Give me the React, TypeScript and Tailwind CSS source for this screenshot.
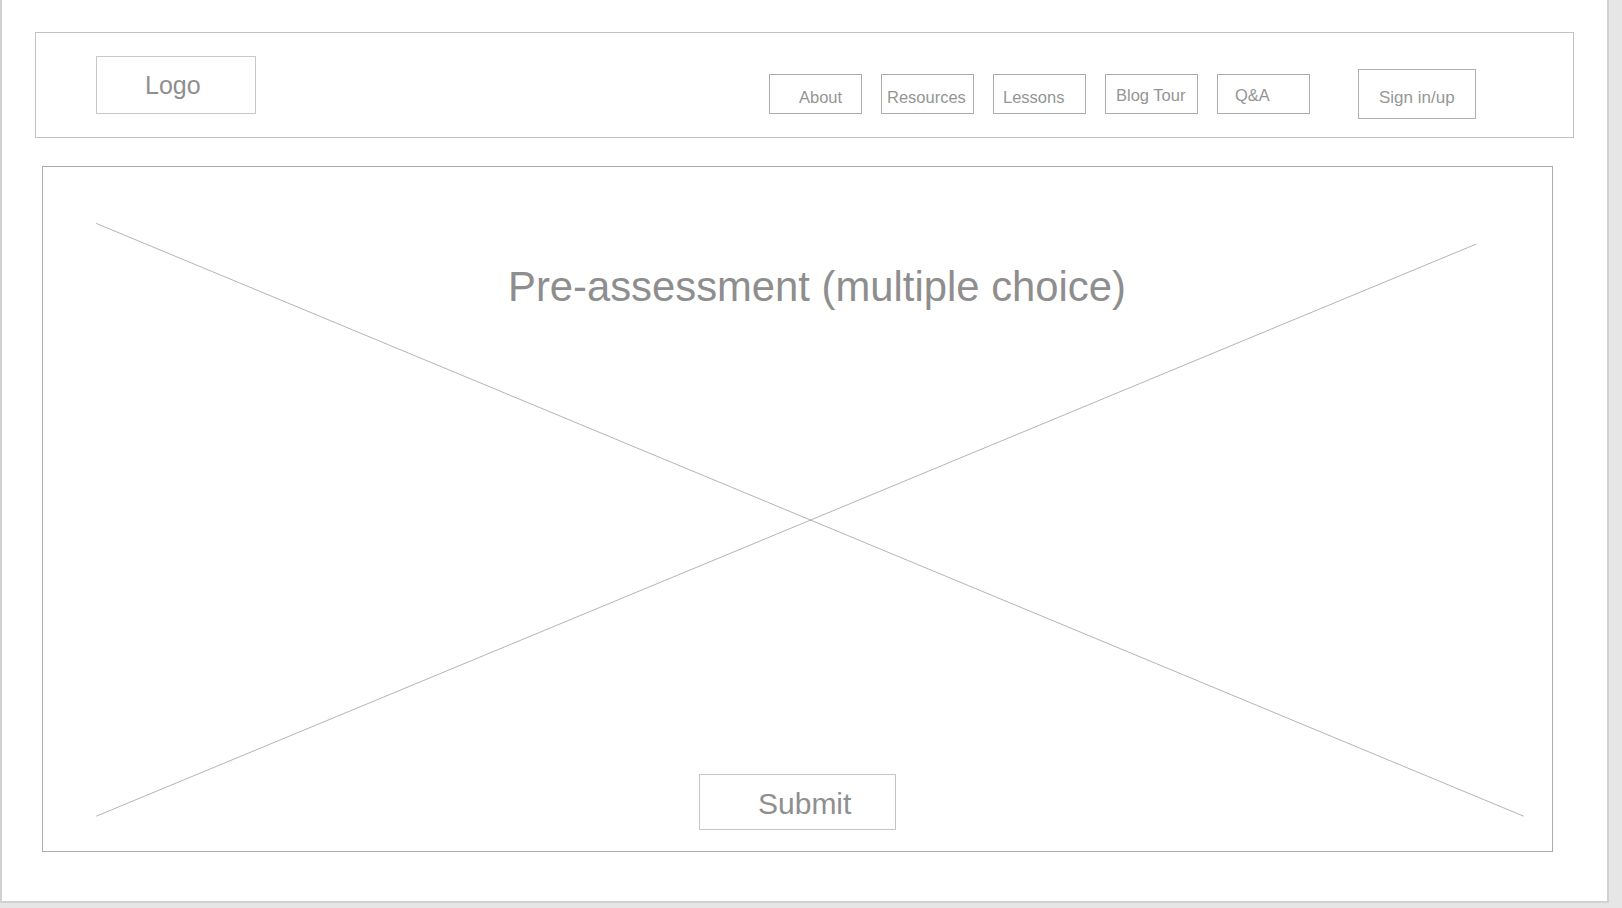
import React from "react";

const font = { fontFamily: '"Liberation Sans", Arial, Helvetica, sans-serif' };

type NavItem = { label: string; pl: string; pt: string };

const navItems: NavItem[] = [
  { label: "About", pl: "pl-[29px]", pt: "pt-[14px]" },
  { label: "Resources", pl: "pl-[5px]", pt: "pt-[14px]" },
  { label: "Lessons", pl: "pl-[9px]", pt: "pt-[14px]" },
  { label: "Blog Tour", pl: "pl-[10px]", pt: "pt-[12px]" },
  { label: "Q&A", pl: "pl-[17px]", pt: "pt-[12px]" },
];

export default function App() {
  return (
    <div className="min-h-screen w-full bg-[#e6e6e6]" style={font}>
      <div className="w-[1609px] h-[903px] bg-white border-l-2 border-r-2 border-b-2 border-[#d2d2d2] flex flex-col">
        {/* Header */}
        <header className="ml-[33px] mt-[32px] w-[1539px] h-[106px] border border-[#c2c2c2] flex items-start">
          <div className="ml-[60px] mt-[23px] w-[160px] h-[58px] border border-[#c8c8c8] pl-[48px] pt-[16px]">
            <span className="block text-[25px] leading-none text-[#8f8f8f]">Logo</span>
          </div>
          <nav className="ml-[513px] mt-[41px] flex gap-[19px]">
            {navItems.map((n) => (
              <div
                key={n.label}
                className={`w-[93px] h-[40px] border border-[#ababab] ${n.pl} ${n.pt}`}
              >
                <span className="block text-[16.5px] leading-none text-[#959595] whitespace-nowrap">
                  {n.label}
                </span>
              </div>
            ))}
          </nav>
          <div className="ml-[48px] mt-[36px] w-[118px] h-[50px] border border-[#b0b0b0] pl-[20px] pt-[19px]">
            <span className="block text-[17px] leading-none text-[#979797] whitespace-nowrap">
              Sign in/up
            </span>
          </div>
        </header>

        {/* Main placeholder */}
        <main className="relative ml-[40px] mt-[28px] w-[1511px] h-[686px] border border-[#ababab] flex flex-col justify-between">
          <svg
            className="absolute inset-0 pointer-events-none"
            width="1509"
            height="684"
            viewBox="0 0 1509 684"
          >
            <line x1="53.2" y1="56.4" x2="1480.7" y2="649.2" stroke="#b4b4b4" strokeWidth="1" />
            <line x1="53.2" y1="649.2" x2="1433.2" y2="77.1" stroke="#b4b4b4" strokeWidth="1" />
          </svg>
          <h1 className="relative pl-[465px] pt-[99px] text-[41.8px] leading-none font-normal text-[#8e8e8e] whitespace-nowrap">
            Pre-assessment (multiple choice)
          </h1>
          <div className="relative ml-[656px] mb-[21px] w-[197px] h-[56px] border border-[#c6c6c6] bg-white pl-[58px] pt-[14px]">
            <span className="block text-[30px] leading-none text-[#8f8f8f]">Submit</span>
          </div>
        </main>
      </div>
    </div>
  );
}
